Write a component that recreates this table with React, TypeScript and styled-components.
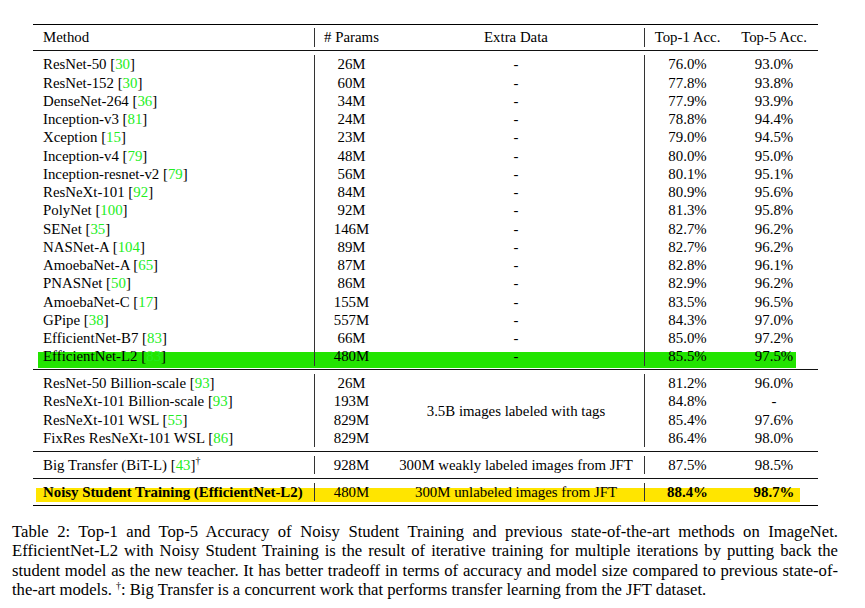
import React from "react";
import styled, { createGlobalStyle, css } from "styled-components";

const GlobalStyle = createGlobalStyle`
  html, body {
    margin: 0;
    padding: 0;
    background: #ffffff;
  }
  body {
    font-family: "Liberation Serif", "Times New Roman", serif;
    color: #000000;
  }
`;

type Tone = "green" | "yellow";

const tones = {
  green: { color: "#22e400", left: "5px", right: "22px", top: "5px", bottom: "-2px" },
  yellow: { color: "#ffe500", left: "3px", right: "18px", top: "5px", bottom: "-1px" },
};

const columns = css`
  display: grid;
  grid-template-columns: 281px 74px 256px 86px 88px;
`;

const Page = styled.div`
  width: 865px;
  padding-top: 23.5px;
`;

const Table = styled.div`
  margin-left: 33px;
  width: 785px;
  border-top: 1.5px solid #000000;
  border-bottom: 1.5px solid #000000;
  font-size: 14.85px;
`;

const Group = styled.div<{ $rule?: boolean }>`
  padding: 3.85px 0;
  border-top: ${(p) => (p.$rule ? "1px solid #111111" : "none")};
`;

const Row = styled.div<{ $tone?: Tone }>`
  ${columns}
  height: 18.25px;
  line-height: 18.25px;
  position: relative;
  z-index: 0;
  ${(p) =>
    p.$tone &&
    css`
      &::before {
        content: "";
        position: absolute;
        z-index: -1;
        background: ${tones[p.$tone].color};
        left: ${tones[p.$tone].left};
        right: ${tones[p.$tone].right};
        top: ${tones[p.$tone].top};
        bottom: ${tones[p.$tone].bottom};
      }
    `}
`;

const MultiGroup = styled(Group)`
  ${columns}
  grid-template-rows: repeat(4, 18.25px);
  line-height: 18.25px;
`;

const Cell = styled.div<{ $left?: boolean; $bar?: boolean; $bold?: boolean }>`
  text-align: ${(p) => (p.$left ? "left" : "center")};
  padding-left: ${(p) => (p.$left ? "10px" : "0")};
  border-left: ${(p) => (p.$bar ? "1px solid #333333" : "none")};
  font-weight: ${(p) => (p.$bold ? "bold" : "normal")};
  white-space: nowrap;
`;

const SpanCell = styled(Cell)`
  grid-row: span 4;
  display: flex;
  align-items: center;
  justify-content: center;
`;

const CiteNum = styled.span`
  color: #22ee22;
`;

const Sup = styled.sup`
  font-size: 10px;
  line-height: 0;
  vertical-align: 6px;
`;

const Caption = styled.p`
  margin: 16px 27px 0 12px;
  font-size: 16.65px;
  line-height: 19.4px;
  text-align: justify;
`;

const Cite = ({ n }: { n: string }) => (
  <>
    [<CiteNum>{n}</CiteNum>]
  </>
);

type Model = { name: string; cite: string; params: string; top1: string; top5: string; tone?: Tone };

const imagenetOnly: Model[] = [
  { name: "ResNet-50", cite: "30", params: "26M", top1: "76.0%", top5: "93.0%" },
  { name: "ResNet-152", cite: "30", params: "60M", top1: "77.8%", top5: "93.8%" },
  { name: "DenseNet-264", cite: "36", params: "34M", top1: "77.9%", top5: "93.9%" },
  { name: "Inception-v3", cite: "81", params: "24M", top1: "78.8%", top5: "94.4%" },
  { name: "Xception", cite: "15", params: "23M", top1: "79.0%", top5: "94.5%" },
  { name: "Inception-v4", cite: "79", params: "48M", top1: "80.0%", top5: "95.0%" },
  { name: "Inception-resnet-v2", cite: "79", params: "56M", top1: "80.1%", top5: "95.1%" },
  { name: "ResNeXt-101", cite: "92", params: "84M", top1: "80.9%", top5: "95.6%" },
  { name: "PolyNet", cite: "100", params: "92M", top1: "81.3%", top5: "95.8%" },
  { name: "SENet", cite: "35", params: "146M", top1: "82.7%", top5: "96.2%" },
  { name: "NASNet-A", cite: "104", params: "89M", top1: "82.7%", top5: "96.2%" },
  { name: "AmoebaNet-A", cite: "65", params: "87M", top1: "82.8%", top5: "96.1%" },
  { name: "PNASNet", cite: "50", params: "86M", top1: "82.9%", top5: "96.2%" },
  { name: "AmoebaNet-C", cite: "17", params: "155M", top1: "83.5%", top5: "96.5%" },
  { name: "GPipe", cite: "38", params: "557M", top1: "84.3%", top5: "97.0%" },
  { name: "EfficientNet-B7", cite: "83", params: "66M", top1: "85.0%", top5: "97.2%" },
  { name: "EfficientNet-L2", cite: "83", params: "480M", top1: "85.5%", top5: "97.5%", tone: "green" },
];

const instagram: Model[] = [
  { name: "ResNet-50 Billion-scale", cite: "93", params: "26M", top1: "81.2%", top5: "96.0%" },
  { name: "ResNeXt-101 Billion-scale", cite: "93", params: "193M", top1: "84.8%", top5: "-" },
  { name: "ResNeXt-101 WSL", cite: "55", params: "829M", top1: "85.4%", top5: "97.6%" },
  { name: "FixRes ResNeXt-101 WSL", cite: "86", params: "829M", top1: "86.4%", top5: "98.0%" },
];

const App: React.FC = () => {
  return (
    <Page>
      <GlobalStyle />
      <Table>
        <Group>
          <Row>
            <Cell $left>Method</Cell>
            <Cell $bar># Params</Cell>
            <Cell>Extra Data</Cell>
            <Cell $bar>Top-1 Acc.</Cell>
            <Cell>Top-5 Acc.</Cell>
          </Row>
        </Group>

        <Group $rule>
          {imagenetOnly.map((m) => (
            <Row key={m.name} $tone={m.tone}>
              <Cell $left>
                {m.name} <Cite n={m.cite} />
              </Cell>
              <Cell $bar>{m.params}</Cell>
              <Cell>-</Cell>
              <Cell $bar>{m.top1}</Cell>
              <Cell>{m.top5}</Cell>
            </Row>
          ))}
        </Group>

        <MultiGroup $rule>
          {instagram.map((m, i) => (
            <React.Fragment key={m.name}>
              <Cell $left>
                {m.name} <Cite n={m.cite} />
              </Cell>
              <Cell $bar>{m.params}</Cell>
              {i === 0 && <SpanCell>3.5B images labeled with tags</SpanCell>}
              <Cell $bar>{m.top1}</Cell>
              <Cell>{m.top5}</Cell>
            </React.Fragment>
          ))}
        </MultiGroup>

        <Group $rule>
          <Row>
            <Cell $left>
              Big Transfer (BiT-L) <Cite n="43" />
              <Sup>†</Sup>
            </Cell>
            <Cell $bar>928M</Cell>
            <Cell>300M weakly labeled images from JFT</Cell>
            <Cell $bar>87.5%</Cell>
            <Cell>98.5%</Cell>
          </Row>
        </Group>

        <Group $rule>
          <Row $tone="yellow">
            <Cell $left $bold>
              Noisy Student Training (EfficientNet-L2)
            </Cell>
            <Cell $bar>480M</Cell>
            <Cell>300M unlabeled images from JFT</Cell>
            <Cell $bar $bold>
              88.4%
            </Cell>
            <Cell $bold>98.7%</Cell>
          </Row>
        </Group>
      </Table>

      <Caption>
        Table 2: Top-1 and Top-5 Accuracy of Noisy Student Training and previous state-of-the-art methods on
        ImageNet. EfficientNet-L2 with Noisy Student Training is the result of iterative training for multiple
        iterations by putting back the student model as the new teacher. It has better tradeoff in terms of
        accuracy and model size compared to previous state-of-the-art models. <Sup>†</Sup>: Big Transfer is a
        concurrent work that performs transfer learning from the JFT dataset.
      </Caption>
    </Page>
  );
};

export default App;
